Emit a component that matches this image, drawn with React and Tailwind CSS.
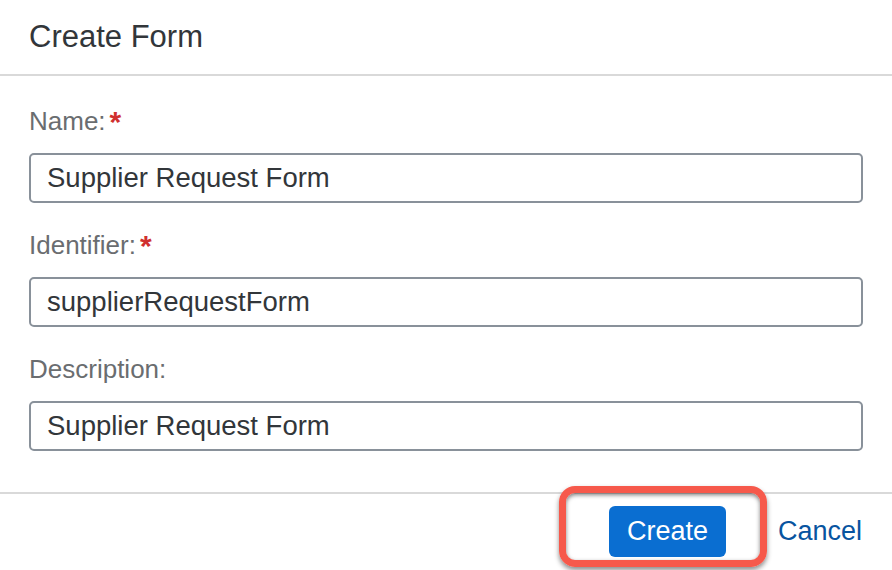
import React, { useState } from 'react';

const fields = [
  { label: 'Name:', required: true, value: 'Supplier Request Form' },
  { label: 'Identifier:', required: true, value: 'supplierRequestForm' },
  { label: 'Description:', required: false, value: 'Supplier Request Form' },
];

const Field = ({ label, required, value, onChange }) => (
  <div className="flex flex-col">
    <label className="h-[31px] mb-[16px] text-[26px] leading-[31px] text-[#6a6d70] flex items-center">
      {label}
      {required && <span className="ml-[4px] text-[30px] text-[#d0302f] font-bold">*</span>}
    </label>
    <input
      value={value}
      onChange={onChange}
      className="h-[50px] w-full rounded-[5px] border-2 border-[#89919a] bg-white px-[16px] text-[27.5px] text-[#32363a] outline-none"
    />
  </div>
);

const App = () => {
  const [values, setValues] = useState(fields.map(f => f.value));

  return (
    <div className="w-[892px] h-[570px] bg-white flex flex-col font-['Liberation_Sans',Arial,sans-serif] overflow-hidden">
      <div className="h-[76px] shrink-0 flex items-center px-[29px] border-b-2 border-[#d9d9d9]">
        <h1 className="text-[31px] text-[#32363a]">Create Form</h1>
      </div>

      <div className="flex flex-col gap-[27px] px-[29px] pt-[30px] pb-[41px] shrink-0">
        {fields.map((f, i) => (
          <Field
            key={f.label}
            {...f}
            value={values[i]}
            onChange={(e) => setValues(values.map((v, j) => (j === i ? e.target.value : v)))}
          />
        ))}
      </div>

      <div className="h-[76px] shrink-0 flex items-center justify-end gap-[52px] pr-[30px] border-t-2 border-[#d9d9d9]">
        <div className="relative">
          <button className="h-[51px] w-[117px] rounded-[6px] bg-[#0a6ed1] text-white text-[27px]">
            Create
          </button>
          {/* highlight annotation */}
          <div className="absolute left-[-50px] right-[-41px] top-[-20px] bottom-[-10px] rounded-[16px] border-[7px] border-[#f6594b] shadow-[0_3px_5px_rgba(0,0,0,0.45),inset_0_2px_4px_rgba(0,0,0,0.5)] pointer-events-none" />
        </div>
        <button className="text-[27px] text-[#0854a0]">Cancel</button>
      </div>
    </div>
  );
};

export default App;
